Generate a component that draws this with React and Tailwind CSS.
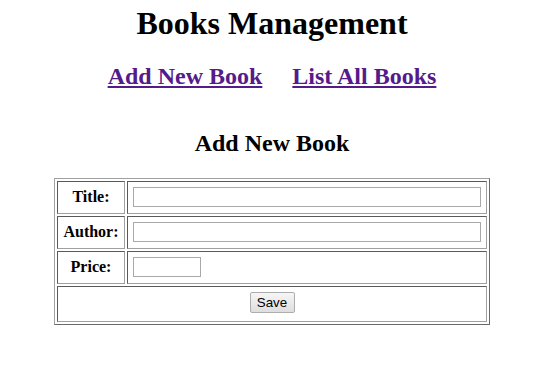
import React, { useState } from "react";

const App = () => {
  const [book, setBook] = useState({ title: "", author: "", price: "" });

  const cell =
    "border border-t-[#5a5a5a] border-l-[#5a5a5a] border-b-[#a0a0a0] border-r-[#a0a0a0] p-[5px] h-[33px]";
  const input =
    "block h-[20px] border border-[#a9a9a9] bg-white px-[2px] text-[13.33px] font-['Liberation_Sans',Arial,sans-serif] outline-none";

  return (
    <div className="min-h-screen bg-white text-black font-['Liberation_Serif','Times_New_Roman',serif] pt-[5px] pl-[9px] pr-[7px]">
      <h1 className="text-[32px] font-bold text-center leading-[36.8px] mb-[21.5px]">
        Books Management
      </h1>

      {/* Nav links */}
      <h2 className="text-[24px] font-bold leading-[27.6px] flex justify-center gap-[30px]">
        <a href="#add" className="text-[#551a8b] underline">
          Add New Book
        </a>
        <a href="#list" className="text-[#551a8b] underline">
          List All Books
        </a>
      </h2>

      <h2 className="text-[24px] font-bold leading-[27.6px] text-center mt-[39px] mb-[20.5px]">
        Add New Book
      </h2>

      <form onSubmit={(e) => e.preventDefault()}>
        <table className="mx-auto w-[436px] table-fixed border-separate border-spacing-[2px] border border-t-[#a0a0a0] border-l-[#a0a0a0] border-b-[#6a6a6a] border-r-[#6a6a6a]">
          <tbody>
            <tr>
              <th className={`${cell} w-[68px] text-[16px] leading-[18.4px]`}>Title:</th>
              <td className={cell}>
                <input
                  type="text"
                  value={book.title}
                  onChange={(e) => setBook({ ...book, title: e.target.value })}
                  className={`${input} w-full`}
                />
              </td>
            </tr>
            <tr>
              <th className={`${cell} text-[16px] leading-[18.4px]`}>Author:</th>
              <td className={cell}>
                <input
                  type="text"
                  value={book.author}
                  onChange={(e) => setBook({ ...book, author: e.target.value })}
                  className={`${input} w-full`}
                />
              </td>
            </tr>
            <tr>
              <th className={`${cell} text-[16px] leading-[18.4px]`}>Price:</th>
              <td className={cell}>
                <input
                  type="text"
                  value={book.price}
                  onChange={(e) => setBook({ ...book, price: e.target.value })}
                  className={`${input} w-[68px]`}
                />
              </td>
            </tr>
            <tr>
              <td colSpan={2} className={`${cell} text-center`}>
                <button
                  type="submit"
                  className="inline-block h-[21px] w-[45px] rounded-[2px] border border-[#adadad] bg-gradient-to-b from-[#f6f6f6] to-[#dedede] text-[13.33px] leading-[19px] text-black font-['Liberation_Sans',Arial,sans-serif] align-top"
                >
                  Save
                </button>
              </td>
            </tr>
          </tbody>
        </table>
      </form>
    </div>
  );
};

export default App;
